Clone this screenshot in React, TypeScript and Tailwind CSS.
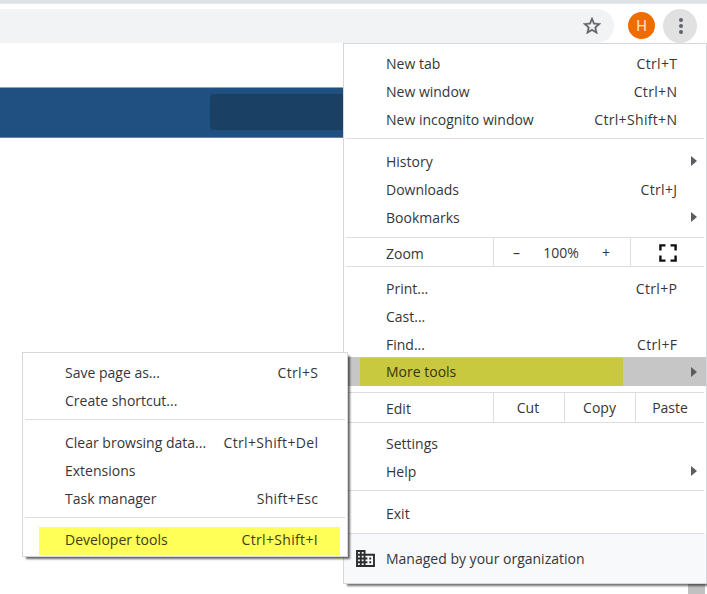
import type { ReactNode } from 'react';

interface RowProps {
  label: string;
  shortcut?: string;
  submenu?: boolean;
}

const Arrow = () => (
  <svg viewBox="0 0 6 10" className="absolute right-[9px] top-[9px] h-[10px] w-[6px] fill-[#5a5d61]">
    <path d="M0 0l6 5-6 5z" />
  </svg>
);

const Row = ({ label, shortcut, submenu }: RowProps) => (
  <div className="relative flex h-7 items-center justify-between pl-[42px] pr-[28.7px] pt-px">
    <span>{label}</span>
    {shortcut && <span className="tracking-[0.33px]">{shortcut}</span>}
    {submenu && <Arrow />}
  </div>
);

const Group = ({ children }: { children: ReactNode }) => <div className="pb-[5px] pt-2">{children}</div>;

const Separator = () => <div className="mx-[2px] h-px bg-[#dcdde2]" />;

const Cell = ({ label, className }: { label: string; className: string }) => (
  <div className={`flex items-center justify-center border-l border-[#dcdde2] ${className}`}>{label}</div>
);

const MainMenu = () => (
  <div className="absolute left-[343px] top-[43px] flex h-[541px] w-[364px] flex-col border border-[#d5d7da] bg-white shadow-[3px_3px_2px_-1px_rgba(0,0,0,0.55)]">
    <div className="pb-[5px] pt-[5px]">
      <Row label="New tab" shortcut="Ctrl+T" />
      <Row label="New window" shortcut="Ctrl+N" />
      <Row label="New incognito window" shortcut="Ctrl+Shift+N" />
    </div>
    <Separator />
    <div className="pb-[6px] pt-2">
      <Row label="History" submenu />
      <Row label="Downloads" shortcut="Ctrl+J" />
      <Row label="Bookmarks" submenu />
    </div>
    <div className="mx-[2px] flex h-[30px] border-y border-[#dcdde2]">
      <div className="flex flex-1 items-center pl-10 pt-1">Zoom</div>
      <div className="flex w-[137px] items-center justify-between border-l border-[#dcdde2] pl-[19px] pr-5 pt-[2px]">
        <span>–</span>
        <span>100%</span>
        <span>+</span>
      </div>
      <div className="flex w-[74px] items-center justify-center border-l border-[#dcdde2] pt-[2px]">
        <svg viewBox="0 0 18 18" className="h-[18px] w-[18px] fill-none stroke-[#111] stroke-[2.4]">
          <path d="M1.4 6.5V1.4H6.5M11.5 1.4h5.1V6.5M16.6 11.5v5.1H11.5M6.5 16.6H1.4V11.5" />
        </svg>
      </div>
    </div>
    <div className="pt-[7px]">
      <Row label="Print..." shortcut="Ctrl+P" />
      <Row label="Cast..." />
      <Row label="Find..." shortcut="Ctrl+F" />
    </div>
    <div className="mt-[-1px] bg-[#c6c6c6] pl-4">
      <div className="relative h-[29px] pt-px">
        <div className="flex h-full w-[263px] items-center bg-[#c8c93f] pl-[26px] text-[#35350f]">More tools</div>
        <svg viewBox="0 0 6 10" className="absolute right-[9px] top-[10px] h-[10px] w-[6px] fill-[#5a5d61]">
          <path d="M0 0l6 5-6 5z" />
        </svg>
      </div>
    </div>
    <div className="mx-[2px] mt-[6px] flex h-[31px] border-y border-[#dcdde2]">
      <div className="flex flex-1 items-center pl-10 pt-[3px]">Edit</div>
      <Cell label="Cut" className="w-[71px] pr-[2px]" />
      <Cell label="Copy" className="w-[71px] pr-px" />
      <Cell label="Paste" className="w-[69px]" />
    </div>
    <div className="pb-[5px] pt-[6px]">
      <Row label="Settings" />
      <Row label="Help" submenu />
    </div>
    <Separator />
    <div className="pb-[6px] pt-2">
      <Row label="Exit" />
    </div>
    <Separator />
    <div className="flex flex-1 items-center bg-[#f8f9fb] pl-3">
      <svg viewBox="2 3 20 18" className="mr-[11px] h-[17px] w-[19px] fill-[#2b2c2f]">
        <path d="M12 7V3H2v18h20V7H12zM6 19H4v-2h2v2zm0-4H4v-2h2v2zm0-4H4V9h2v2zm0-4H4V5h2v2zm4 12H8v-2h2v2zm0-4H8v-2h2v2zm0-4H8V9h2v2zm0-4H8V5h2v2zm10 12h-8v-2h2v-2h-2v-2h2v-2h-2V9h8v10zm-2-8h-2v2h2v-2zm0 4h-2v2h2v-2z" />
      </svg>
      <span>Managed by your organization</span>
    </div>
  </div>
);

const MoreToolsMenu = () => (
  <div className="absolute left-[22px] top-[352px] flex h-[205px] w-[326px] flex-col border border-[#d5d7da] bg-white shadow-[3px_3px_2px_-1px_rgba(0,0,0,0.6)]">
    <div className="pb-[5px] pt-[5px]">
      <Row label="Save page as..." shortcut="Ctrl+S" />
      <Row label="Create shortcut..." />
    </div>
    <Separator />
    <Group>
      <Row label="Clear browsing data..." shortcut="Ctrl+Shift+Del" />
      <Row label="Extensions" />
      <Row label="Task manager" shortcut="Shift+Esc" />
    </Group>
    <Separator />
    <div className="ml-4 mr-[7px] mt-[9px] flex h-7 items-center justify-between bg-[#ffff57] pb-[2px] pl-[26px] pr-[22px] text-[#3d3d15]">
      <span>Developer tools</span>
      <span className="tracking-[0.33px]">Ctrl+Shift+I</span>
    </div>
  </div>
);

const Toolbar = () => (
  <div className="flex h-[35px] items-center">
    <div className="flex h-[34px] w-[614px] items-center justify-end rounded-r-full bg-[#f1f3f4] pr-[13px]">
      <svg viewBox="2 2 20 19" className="h-[17px] w-[18px] fill-[#5f6368] stroke-[#5f6368] stroke-[0.4]">
        <path d="M22 9.24l-7.19-.62L12 2 9.19 8.63 2 9.24l5.46 4.73L5.82 21 12 17.27 18.18 21l-1.63-7.03L22 9.24zM12 15.4l-3.76 2.27 1-4.28-3.32-2.88 4.38-.38L12 6.1l1.71 4.04 4.38.38-3.32 2.88 1 4.28L12 15.4z" />
      </svg>
    </div>
    <div className="ml-[14px] flex size-[27px] items-center justify-center rounded-full bg-[#ef6c00] pt-px font-[Roboto] text-[15px] text-[#fbe3d0]">
      H
    </div>
    <div className="ml-2 flex size-[34px] flex-col items-center justify-center gap-[2px] rounded-full bg-[#e1e1e1] pl-px">
      <span className="size-1 rounded-full bg-[#5f6368]" />
      <span className="size-1 rounded-full bg-[#5f6368]" />
      <span className="size-1 rounded-full bg-[#5f6368]" />
    </div>
  </div>
);

export default function App() {
  return (
    <div className="relative h-[594px] w-[707px] overflow-hidden bg-white font-['Open_Sans','Noto_Sans',sans-serif] text-[14px] leading-5 text-[#35363a]">
      <div className="h-1 border-b border-[#e6e8eb] bg-[#dee1e6]" />
      <div className="h-1" />
      <Toolbar />
      <div className="mt-11 flex h-[51px] justify-end border-y border-t-[#8ba3bb] border-b-[#6e7f91] bg-[#205081]">
        <div className="mb-[7px] mt-[6px] w-[497px] rounded-l bg-[#1a4064]" />
      </div>
      <div className="absolute bottom-0 right-[2px] h-3 w-[17px] bg-[#c1c1c1]" />
      <MainMenu />
      <MoreToolsMenu />
    </div>
  );
}
